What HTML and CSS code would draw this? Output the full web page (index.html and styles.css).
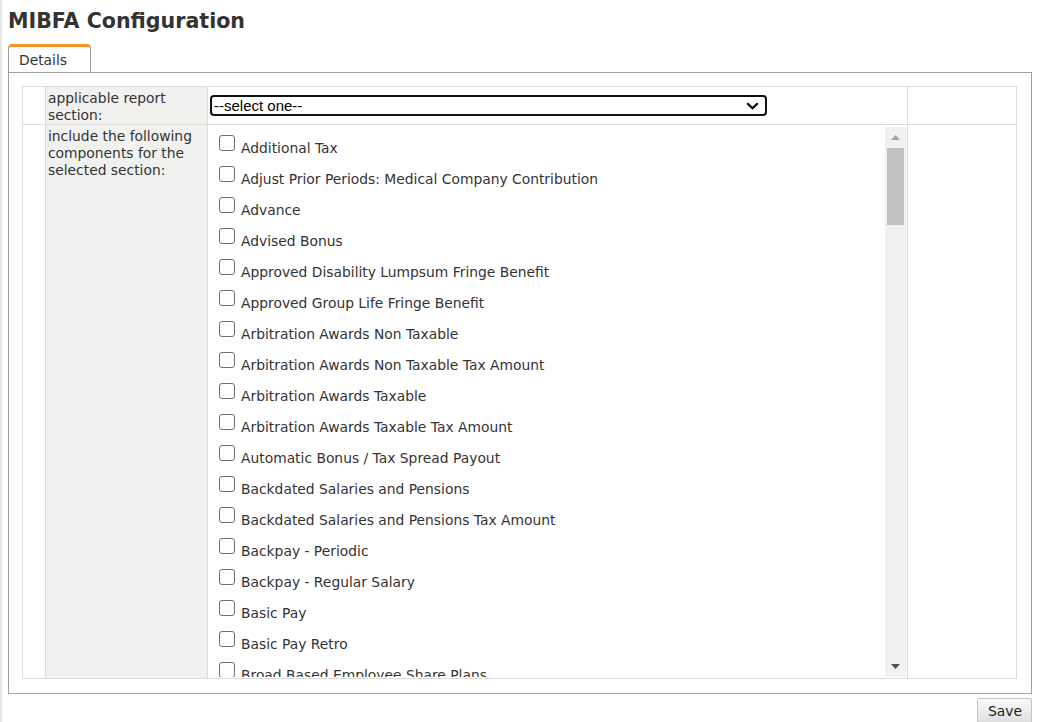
FILE: index.html
```html
<!DOCTYPE html>
<html lang="en">
<head>
<meta charset="utf-8">
<title>MIBFA Configuration</title>
<link rel="stylesheet" href="styles.css">
</head>
<body>
<div class="page">
  <h1 class="title">MIBFA Configuration</h1>
  <div class="tabs"><div class="tab">Details</div></div>
  <div class="panel">
    <table class="form">
      <colgroup>
        <col class="c-gutter">
        <col class="c-label">
        <col class="c-field">
        <col class="c-spare">
      </colgroup>
      <tr>
        <td class="gutter"></td>
        <td class="label">applicable report section:</td>
        <td class="field"><select class="select"><option>--select one--</option></select></td>
        <td class="spare"></td>
      </tr>
      <tr>
        <td class="gutter"></td>
        <td class="label">include the following components for the selected section:</td>
        <td class="field list-cell">
          <div class="scroller">
            <div class="list">
              <label class="item"><input type="checkbox" class="cb"><span>Additional Tax</span></label>
              <label class="item"><input type="checkbox" class="cb"><span>Adjust Prior Periods: Medical Company Contribution</span></label>
              <label class="item"><input type="checkbox" class="cb"><span>Advance</span></label>
              <label class="item"><input type="checkbox" class="cb"><span>Advised Bonus</span></label>
              <label class="item"><input type="checkbox" class="cb"><span>Approved Disability Lumpsum Fringe Benefit</span></label>
              <label class="item"><input type="checkbox" class="cb"><span>Approved Group Life Fringe Benefit</span></label>
              <label class="item"><input type="checkbox" class="cb"><span>Arbitration Awards Non Taxable</span></label>
              <label class="item"><input type="checkbox" class="cb"><span>Arbitration Awards Non Taxable Tax Amount</span></label>
              <label class="item"><input type="checkbox" class="cb"><span>Arbitration Awards Taxable</span></label>
              <label class="item"><input type="checkbox" class="cb"><span>Arbitration Awards Taxable Tax Amount</span></label>
              <label class="item"><input type="checkbox" class="cb"><span>Automatic Bonus / Tax Spread Payout</span></label>
              <label class="item"><input type="checkbox" class="cb"><span>Backdated Salaries and Pensions</span></label>
              <label class="item"><input type="checkbox" class="cb"><span>Backdated Salaries and Pensions Tax Amount</span></label>
              <label class="item"><input type="checkbox" class="cb"><span>Backpay - Periodic</span></label>
              <label class="item"><input type="checkbox" class="cb"><span>Backpay - Regular Salary</span></label>
              <label class="item"><input type="checkbox" class="cb"><span>Basic Pay</span></label>
              <label class="item"><input type="checkbox" class="cb"><span>Basic Pay Retro</span></label>
              <label class="item"><input type="checkbox" class="cb"><span>Broad Based Employee Share Plans</span></label>
              <label class="item"><input type="checkbox" class="cb"><span>Bursaries and Scholarships</span></label>
              <label class="item"><input type="checkbox" class="cb"><span>Car Allowance</span></label>
              <label class="item"><input type="checkbox" class="cb"><span>Cellphone Allowance</span></label>
              <label class="item"><input type="checkbox" class="cb"><span>Commission</span></label>
              <label class="item"><input type="checkbox" class="cb"><span>Company Car Fringe Benefit</span></label>
              <label class="item"><input type="checkbox" class="cb"><span>Company Contribution: Bargaining Council</span></label>
              <label class="item"><input type="checkbox" class="cb"><span>Company Contribution: Group Life</span></label>
              <label class="item"><input type="checkbox" class="cb"><span>Company Contribution: Medical Aid</span></label>
              <label class="item"><input type="checkbox" class="cb"><span>Company Contribution: Pension Fund</span></label>
              <label class="item"><input type="checkbox" class="cb"><span>Company Contribution: Provident Fund</span></label>
              <label class="item"><input type="checkbox" class="cb"><span>Company Contribution: Retirement Annuity</span></label>
              <label class="item"><input type="checkbox" class="cb"><span>Company Contribution: SDL</span></label>
              <label class="item"><input type="checkbox" class="cb"><span>Company Contribution: UIF</span></label>
              <label class="item"><input type="checkbox" class="cb"><span>Compensation for Loss of Office</span></label>
              <label class="item"><input type="checkbox" class="cb"><span>Danger Allowance</span></label>
              <label class="item"><input type="checkbox" class="cb"><span>Death Benefit</span></label>
              <label class="item"><input type="checkbox" class="cb"><span>Directors Fees</span></label>
              <label class="item"><input type="checkbox" class="cb"><span>Disability Income Protection</span></label>
              <label class="item"><input type="checkbox" class="cb"><span>Employee Contribution: Bargaining Council</span></label>
              <label class="item"><input type="checkbox" class="cb"><span>Employee Contribution: Medical Aid</span></label>
              <label class="item"><input type="checkbox" class="cb"><span>Employee Contribution: Pension Fund</span></label>
              <label class="item"><input type="checkbox" class="cb"><span>Employee Contribution: Provident Fund</span></label>
              <label class="item"><input type="checkbox" class="cb"><span>Employee Contribution: Retirement Annuity</span></label>
              <label class="item"><input type="checkbox" class="cb"><span>Employee Contribution: UIF</span></label>
              <label class="item"><input type="checkbox" class="cb"><span>Employer Loan Repayment</span></label>
              <label class="item"><input type="checkbox" class="cb"><span>Entertainment Allowance</span></label>
              <label class="item"><input type="checkbox" class="cb"><span>Exempt Income</span></label>
              <label class="item"><input type="checkbox" class="cb"><span>Extra Pay</span></label>
              <label class="item"><input type="checkbox" class="cb"><span>Fixed Allowance</span></label>
              <label class="item"><input type="checkbox" class="cb"><span>Foreign Service Income</span></label>
              <label class="item"><input type="checkbox" class="cb"><span>Free or Cheap Accommodation</span></label>
              <label class="item"><input type="checkbox" class="cb"><span>Free or Cheap Services</span></label>
              <label class="item"><input type="checkbox" class="cb"><span>Fuel Allowance</span></label>
              <label class="item"><input type="checkbox" class="cb"><span>Garnishee Order</span></label>
              <label class="item"><input type="checkbox" class="cb"><span>Gratuity</span></label>
              <label class="item"><input type="checkbox" class="cb"><span>Group Life Employee Contribution</span></label>
              <label class="item"><input type="checkbox" class="cb"><span>Housing Allowance</span></label>
              <label class="item"><input type="checkbox" class="cb"><span>Housing Subsidy</span></label>
              <label class="item"><input type="checkbox" class="cb"><span>Income Protection</span></label>
              <label class="item"><input type="checkbox" class="cb"><span>Income Tax Deduction</span></label>
              <label class="item"><input type="checkbox" class="cb"><span>Interest Free Loan</span></label>
              <label class="item"><input type="checkbox" class="cb"><span>Leave Encashment</span></label>
              <label class="item"><input type="checkbox" class="cb"><span>Leave Pay</span></label>
              <label class="item"><input type="checkbox" class="cb"><span>Leave Pay Out</span></label>
              <label class="item"><input type="checkbox" class="cb"><span>Loan Repayment</span></label>
              <label class="item"><input type="checkbox" class="cb"><span>Long Service Award</span></label>
              <label class="item"><input type="checkbox" class="cb"><span>Low Interest Loan Fringe Benefit</span></label>
              <label class="item"><input type="checkbox" class="cb"><span>Lumpsum Withdrawal Benefit</span></label>
              <label class="item"><input type="checkbox" class="cb"><span>Maternity Leave Pay</span></label>
              <label class="item"><input type="checkbox" class="cb"><span>Meal Allowance</span></label>
              <label class="item"><input type="checkbox" class="cb"><span>Medical Aid Tax Credit</span></label>
              <label class="item"><input type="checkbox" class="cb"><span>Medical Costs Paid by Employer</span></label>
              <label class="item"><input type="checkbox" class="cb"><span>Night Shift Allowance</span></label>
              <label class="item"><input type="checkbox" class="cb"><span>Non Taxable Reimbursement</span></label>
              <label class="item"><input type="checkbox" class="cb"><span>Notice Pay</span></label>
              <label class="item"><input type="checkbox" class="cb"><span>Overtime 1.5</span></label>
              <label class="item"><input type="checkbox" class="cb"><span>Overtime 2.0</span></label>
              <label class="item"><input type="checkbox" class="cb"><span>Overtime Retro</span></label>
              <label class="item"><input type="checkbox" class="cb"><span>Payment of Employee Debt</span></label>
              <label class="item"><input type="checkbox" class="cb"><span>Pension Fund Arrears</span></label>
              <label class="item"><input type="checkbox" class="cb"><span>Performance Bonus</span></label>
              <label class="item"><input type="checkbox" class="cb"><span>Personal Protective Equipment</span></label>
              <label class="item"><input type="checkbox" class="cb"><span>Public Holiday Pay</span></label>
              <label class="item"><input type="checkbox" class="cb"><span>Public Office Allowance</span></label>
              <label class="item"><input type="checkbox" class="cb"><span>Reimbursive Travel Allowance</span></label>
              <label class="item"><input type="checkbox" class="cb"><span>Relocation Allowance</span></label>
              <label class="item"><input type="checkbox" class="cb"><span>Restraint of Trade</span></label>
              <label class="item"><input type="checkbox" class="cb"><span>Retirement Annuity Arrears</span></label>
              <label class="item"><input type="checkbox" class="cb"><span>Retrenchment Package</span></label>
              <label class="item"><input type="checkbox" class="cb"><span>Right of Use of Asset</span></label>
              <label class="item"><input type="checkbox" class="cb"><span>Salary Advance</span></label>
              <label class="item"><input type="checkbox" class="cb"><span>Sales Incentive</span></label>
              <label class="item"><input type="checkbox" class="cb"><span>Severance Benefit</span></label>
              <label class="item"><input type="checkbox" class="cb"><span>Share Options Exercised</span></label>
              <label class="item"><input type="checkbox" class="cb"><span>Shift Allowance</span></label>
              <label class="item"><input type="checkbox" class="cb"><span>Sick Leave Pay</span></label>
              <label class="item"><input type="checkbox" class="cb"><span>Site Allowance</span></label>
              <label class="item"><input type="checkbox" class="cb"><span>Standby Allowance</span></label>
              <label class="item"><input type="checkbox" class="cb"><span>Subsistence Allowance: Foreign</span></label>
              <label class="item"><input type="checkbox" class="cb"><span>Subsistence Allowance: Local</span></label>
              <label class="item"><input type="checkbox" class="cb"><span>Tax Directive Amount</span></label>
              <label class="item"><input type="checkbox" class="cb"><span>Tax on Retirement Lumpsum</span></label>
              <label class="item"><input type="checkbox" class="cb"><span>Telephone Allowance</span></label>
              <label class="item"><input type="checkbox" class="cb"><span>Thirteenth Cheque</span></label>
              <label class="item"><input type="checkbox" class="cb"><span>Tips and Gratuities</span></label>
              <label class="item"><input type="checkbox" class="cb"><span>Tool Allowance</span></label>
              <label class="item"><input type="checkbox" class="cb"><span>Travel Allowance</span></label>
              <label class="item"><input type="checkbox" class="cb"><span>Travel Allowance Fixed</span></label>
              <label class="item"><input type="checkbox" class="cb"><span>Travel Claim</span></label>
              <label class="item"><input type="checkbox" class="cb"><span>Uniform Allowance</span></label>
              <label class="item"><input type="checkbox" class="cb"><span>Union Fees</span></label>
              <label class="item"><input type="checkbox" class="cb"><span>Unpaid Leave</span></label>
              <label class="item"><input type="checkbox" class="cb"><span>Use of Motor Vehicle</span></label>
              <label class="item"><input type="checkbox" class="cb"><span>Vehicle Allowance</span></label>
              <label class="item"><input type="checkbox" class="cb"><span>Voluntary Tax Over Deduction</span></label>
              <label class="item"><input type="checkbox" class="cb"><span>Weekend Allowance</span></label>
              <label class="item"><input type="checkbox" class="cb"><span>Workmen's Compensation</span></label>
              <label class="item"><input type="checkbox" class="cb"><span>Year End Bonus</span></label>
              <label class="item"><input type="checkbox" class="cb"><span>Youth Employment Incentive</span></label>
            </div>
            <div class="scrollbar" aria-hidden="true">
              <div class="sb-btn">
                <svg width="9" height="5" viewBox="0 0 9 5"><path d="M0 5H9L4.5 0Z" fill="#a3a3a3"/></svg>
              </div>
              <div class="sb-track"><div class="sb-thumb"></div></div>
              <div class="sb-btn">
                <svg width="9" height="5" viewBox="0 0 9 5"><path d="M0 0H9L4.5 5Z" fill="#505050"/></svg>
              </div>
            </div>
          </div>
        </td>
        <td class="spare"></td>
      </tr>
    </table>
  </div>
  <div class="actions"><button type="button" class="btn">Save</button></div>
</div>
</body>
</html>
```

FILE: styles.css
```css
html, body {
  margin: 0;
  padding: 0;
  background: #fff;
}

body {
  font-family: "DejaVu Sans", Verdana, sans-serif;
  font-size: 13.85px;
  color: #333;
}

.page {
  box-sizing: border-box;
  height: 722px;
  border-left: 2px solid #e6e6e6;
  padding: 0 6px;
  overflow: hidden;
}

.title {
  margin: 9px 0 11px 0;
  font-size: 20.6px;
  line-height: 24px;
  font-weight: bold;
  color: #333;
}

.tabs {
  display: flex;
}

.tab {
  box-sizing: border-box;
  width: 83px;
  height: 28px;
  border: 1px solid #a0a0a0;
  border-top: 3px solid #f7941e;
  border-bottom: 0;
  border-radius: 4px 4px 0 0;
  padding: 5px 0 0 10px;
  line-height: 17px;
  color: #333;
  background: #fff;
}

.panel {
  border: 1px solid #a0a0a0;
  padding: 13px 14px 14px 13px;
}

.form {
  width: 100%;
  table-layout: fixed;
  border-collapse: collapse;
}

.c-gutter { width: 23px; }
.c-label { width: 162px; }
.c-spare { width: 109px; }

.form td {
  border: 1px solid #dedcd6;
  padding: 0;
  vertical-align: top;
}

.form .label {
  background: #f1f1ef;
  padding: 3px 3px 1px 2px;
  line-height: 16.7px;
  color: #333;
}

.form .field {
  vertical-align: middle;
  padding: 0 0 0 2px;
}

.select {
  display: block;
  box-sizing: border-box;
  width: 557px;
  height: 21px;
  margin: 0;
  padding: 0 0 0 2px;
  border: 2px solid #111;
  border-radius: 4px;
  font-family: "Liberation Sans", Arial, sans-serif;
  font-size: 15px;
  color: #000;
  background: #fff url("data:image/svg+xml,%3Csvg xmlns='http://www.w3.org/2000/svg' width='13' height='8' viewBox='0 0 13 8'%3E%3Cpath d='M1.2 1.2 6.5 6.3 11.8 1.2' fill='none' stroke='%23000' stroke-width='2.2'/%3E%3C/svg%3E") no-repeat right 6px center;
  -webkit-appearance: none;
  appearance: none;
  outline: none;
}

.form .list-cell {
  vertical-align: top;
  padding: 2px 1px 1px 0;
}

.scroller {
  display: flex;
  height: 550px;
}

.list {
  flex: 1;
  min-width: 0;
  overflow: hidden;
  padding-left: 11px;
}

.scrollbar {
  flex: none;
  width: 21px;
  display: flex;
  flex-direction: column;
  background: #f1f1f1;
}

.sb-btn {
  flex: none;
  height: 21px;
  display: flex;
  align-items: center;
  justify-content: center;
}

.sb-btn svg {
  display: block;
}

.sb-track {
  flex: 1;
  padding: 0 2px;
}

.sb-thumb {
  height: 77px;
  background: #c1c1c1;
}

.item {
  display: flex;
  align-items: flex-start;
  height: 31px;
  white-space: nowrap;
  color: #333;
}

.cb {
  -webkit-appearance: none;
  appearance: none;
  box-sizing: border-box;
  flex: none;
  width: 16px;
  height: 16px;
  margin: 8px 6px 0 0;
  border: 1px solid #6e6e6e;
  border-radius: 3px;
  background: #fff;
}

.item span {
  margin-top: 12.5px;
  line-height: 16px;
}

.actions {
  display: flex;
  justify-content: flex-end;
  margin-top: 4px;
}

.btn {
  box-sizing: border-box;
  height: 26px;
  padding: 0 9px 1px 10px;
  border: 1px solid #c4c4c4;
  border-radius: 2px;
  background: linear-gradient(#fafafa, #dedede);
  font-family: "DejaVu Sans", Verdana, sans-serif;
  font-size: 13.85px;
  color: #222;
}
```
